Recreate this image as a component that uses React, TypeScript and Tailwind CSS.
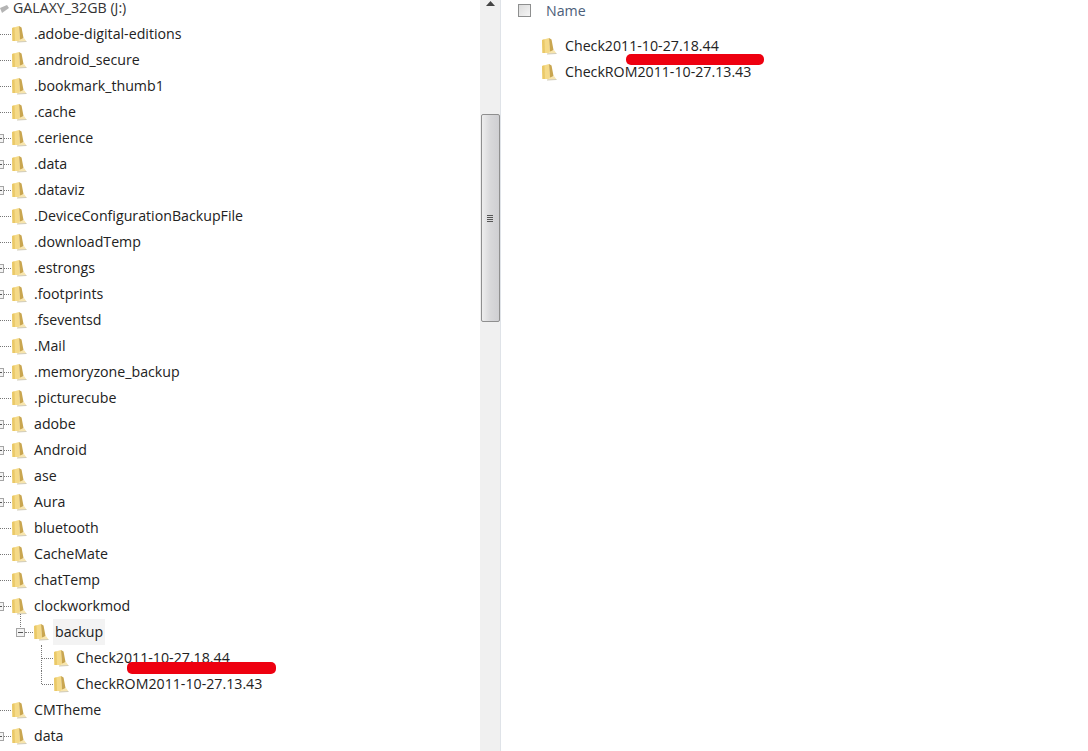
const rows: [string, boolean][] = [
  [".adobe-digital-editions", false],
  [".android_secure", false],
  [".bookmark_thumb1", false],
  [".cache", false],
  [".cerience", true],
  [".data", true],
  [".dataviz", true],
  [".DeviceConfigurationBackupFile", false],
  [".downloadTemp", false],
  [".estrongs", true],
  [".footprints", true],
  [".fseventsd", false],
  [".Mail", false],
  [".memoryzone_backup", true],
  [".picturecube", false],
  ["adobe", true],
  ["Android", true],
  ["ase", true],
  ["Aura", true],
  ["bluetooth", false],
  ["CacheMate", false],
  ["chatTemp", false],
  ["clockworkmod", true],
];

function Folder() {
  return (
    <svg width="16" height="18" viewBox="0 0 16 18" className="shrink-0">
      <path d="M1 3 L8 1 L9 16 L1.5 16 Z" fill="#f5da88" />
      <path d="M1 3 L3.5 2.3 L4 16 L1.5 16 Z" fill="#eac968" />
      <path d="M8 1 L10.5 2.5 L12.5 13 L9 16 Z" fill="#c9a650" />
      <path d="M9 14.5 L13 13 L15.5 16.5 L6 17 Z" fill="#f7e5ae" />
      <path d="M6 17 L15.5 16.5" stroke="#cfcab8" strokeWidth="1" />
    </svg>
  );
}

function Expander() {
  return (
    <span className="flex h-[9px] w-[9px] shrink-0 items-center justify-center border border-[#a5a5a5] bg-[#f4f4f4]">
      <span className="h-px w-[5px] bg-[#555]" />
    </span>
  );
}

function Row({ name, exp }: { name: string; exp: boolean }) {
  return (
    <div className="flex h-[26px] items-center">
      <div className="flex w-[11px] shrink-0 items-center">
        {exp ? (
          <>
            <div className="ml-[-5px]">
              <Expander />
            </div>
            <div className="w-[7px] border-t border-dotted border-[#777]" />
          </>
        ) : (
          <div className="w-[11px] border-t border-dotted border-[#777]" />
        )}
      </div>
      <Folder />
      <span className="ml-[7px] text-[#222]">{name}</span>
    </div>
  );
}

function Child({ name, last, highlight }: { name: string; last?: boolean; highlight?: boolean }) {
  return (
    <div className="relative flex h-[26px] items-center pl-[42px]">
      {/* tree connector */}
      <div className={`absolute left-[41px] top-0 border-l border-dotted border-[#777] ${last ? "h-[13px]" : "h-[26px]"}`} />
      <div className="w-[11px] shrink-0 border-t border-dotted border-[#777]" />
      <Folder />
      <span className="relative ml-[7px] text-[#222]">
        {name}
        {highlight && (
          <span className="absolute left-[51px] top-[15px] h-[12px] w-[149px] rounded-[5px] bg-[#ee0010]" />
        )}
      </span>
    </div>
  );
}

function Scrollbar() {
  return (
    <div className="flex w-[21px] shrink-0 flex-col items-center border-r border-[#dfe3e8] bg-[#f0f0f0]">
      <svg width="9" height="5" viewBox="0 0 9 5" className="mt-[1px]">
        <path d="M0 5 L4.5 0 L9 5 Z" fill="#444" />
      </svg>
      <div className="mt-[108px] flex h-[208px] w-[19px] items-center justify-center rounded-[2px] border border-[#8f8f8f] bg-gradient-to-r from-[#eeeeee] via-[#d8d8da] to-[#cfcfd2]">
        <div className="flex flex-col gap-px">
          <span className="h-px w-[6px] bg-[#555]" />
          <span className="h-px w-[6px] bg-[#555]" />
          <span className="h-px w-[6px] bg-[#555]" />
          <span className="h-px w-[6px] bg-[#555]" />
        </div>
      </div>
    </div>
  );
}

export default function App() {
  return (
    <div className="flex h-[751px] w-[1088px] overflow-hidden bg-white font-['Open_Sans',sans-serif] text-[14.2px]">
      <div className="w-[480px] shrink-0 overflow-hidden">
        <div className="flex h-[16px] items-center">
          <svg width="9" height="12" viewBox="0 0 9 12" className="shrink-0">
            <path d="M0 6 L7 3 L9 6 L2 11 Z" fill="#b4b4b4" />
          </svg>
          <span className="ml-[4px] leading-[16px] text-[#333]">GALAXY_32GB (J:)</span>
        </div>
        <div className="mt-[5px]">
          {rows.map(([name, exp]) => (
            <Row key={name} name={name} exp={exp} />
          ))}
          <div className="relative flex h-[26px] items-center pl-[16px]">
            <div className="absolute left-[20px] top-[-5px] h-[13px] border-l border-dotted border-[#777]" />
            <Expander />
            <div className="w-[8px] border-t border-dotted border-[#777]" />
            <Folder />
            <span className="ml-[4px] flex h-[26px] items-center bg-[#f3f3f3] px-[2px] text-[#222]">backup</span>
          </div>
          <Child name="Check2011-10-27.18.44" highlight />
          <Child name="CheckROM2011-10-27.13.43" last />
          <Row name="CMTheme" exp={false} />
          <Row name="data" exp />
        </div>
      </div>
      <Scrollbar />
      <div className="flex-1 pl-[17px]">
        <div className="flex h-[20px] items-center">
          <span className="h-[13px] w-[13px] border border-[#8e8f8f] bg-gradient-to-br from-[#dcdcdc] to-[#f5f5f5]" />
          <span className="ml-[15px] mt-[2px] text-[#4c607a]">Name</span>
        </div>
        <div className="mt-[13px] pl-[23px]">
          <div className="flex h-[26px] items-center">
            <Folder />
            <span className="relative ml-[8px] text-[#222]">
              Check2011-10-27.18.44
              <span className="absolute left-[61px] top-[19px] h-[11px] w-[138px] rounded-[5px] bg-[#ee0010]" />
            </span>
          </div>
          <div className="flex h-[26px] items-center">
            <Folder />
            <span className="ml-[8px] text-[#222]">CheckROM2011-10-27.13.43</span>
          </div>
        </div>
      </div>
    </div>
  );
}
